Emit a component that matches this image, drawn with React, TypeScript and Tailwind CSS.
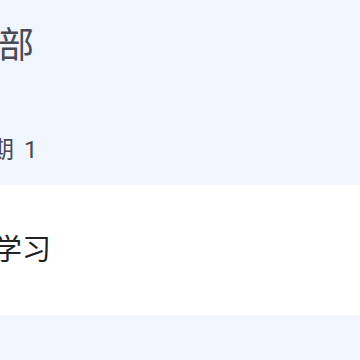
import React from "react";

export default function App() {
  return (
    <div
      className="h-[360px] w-[360px] overflow-hidden bg-[#f1f5fe]"
      style={{ fontFamily: 'Roboto, "Noto Sans CJK SC", sans-serif' }}
    >
      <div className="pt-[28px]">
        <div className="-ml-[38px] whitespace-nowrap text-[36px] leading-none text-[#4a4a55]">全部</div>
      </div>
      <div className="mt-[74px] h-[24px]">
        <div className="-ml-[34px] flex whitespace-nowrap text-[24px] leading-none text-[#4a4a55]">
          <span>星期</span>
          <span className="ml-[10px]">1</span>
        </div>
      </div>
      <div className="mt-[23px] flex h-[130px] items-center bg-white">
        <div className="-ml-[7px] whitespace-nowrap text-[29px] leading-none text-[#222222]">学习</div>
      </div>
    </div>
  );
}
